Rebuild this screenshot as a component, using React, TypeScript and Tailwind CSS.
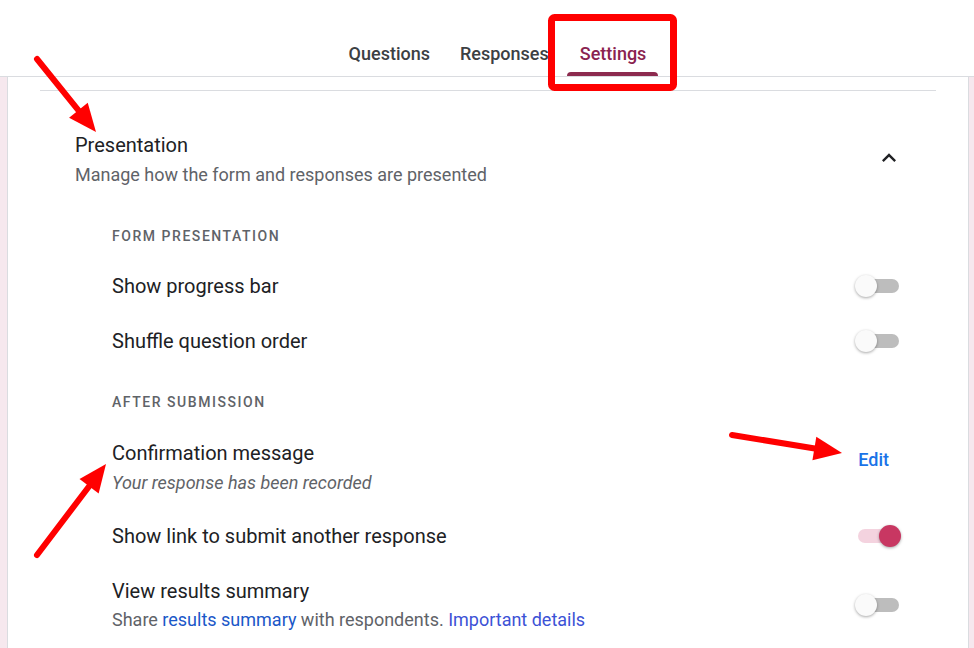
import React from "react";

function Toggle({ on = false }: { on?: boolean }) {
  return (
    <div className="relative w-[46px] h-[24px] shrink-0">
      <div
        className={
          "absolute left-[3px] right-[2px] top-[5px] h-[14px] rounded-full " +
          (on ? "bg-[#f4d3df]" : "bg-[#bdbdbd]")
        }
      />
      <div
        className={
          "absolute top-[1px] w-[22px] h-[22px] rounded-full shadow-[0_1px_3px_rgba(0,0,0,0.35)] " +
          (on ? "right-0 bg-[#c83762]" : "left-0 bg-[#fafafa]")
        }
      />
    </div>
  );
}

function Arrow({ x1, y1, x2, y2 }: { x1: number; y1: number; x2: number; y2: number }) {
  const dx = x2 - x1;
  const dy = y2 - y1;
  const len = Math.sqrt(dx * dx + dy * dy);
  const ux = dx / len;
  const uy = dy / len;
  const hl = 28;
  const hw = 12;
  const bx = x2 - ux * hl;
  const by = y2 - uy * hl;
  const p1 = `${bx - uy * hw},${by + ux * hw}`;
  const p2 = `${bx + uy * hw},${by - ux * hw}`;
  return (
    <g>
      <line x1={x1} y1={y1} x2={bx + ux * 2} y2={by + uy * 2} stroke="#ff0000" strokeWidth={6} strokeLinecap="round" />
      <polygon points={`${x2},${y2} ${p1} ${p2}`} fill="#ff0000" />
    </g>
  );
}

export default function App() {
  return (
    <div
      className="relative w-[974px] h-[648px] overflow-hidden bg-[#f6e8ee]"
      style={{ fontFamily: "Roboto, 'Noto Sans', sans-serif" }}
    >
      {/* Header */}
      <div className="h-[77px] bg-white border-b border-[#dadce0] flex justify-center items-end">
        <div className="flex items-end ml-[24px]">
          <div className="px-[15px] h-[76px] flex items-center pt-[30px] text-[18px] font-medium text-[#3c4043]">Questions</div>
          <div className="px-[15px] h-[76px] flex items-center pt-[30px] text-[18px] font-medium text-[#3c4043]">Responses</div>
          <div className="relative pl-[16px] pr-[18px] h-[76px] flex items-center pt-[30px] text-[18px] font-medium text-[#8a2350]">
            Settings
            <div className="absolute left-[3px] right-[6px] bottom-0 h-[4px] rounded-t-[4px] bg-[#8c2a4e]" />
          </div>
        </div>
      </div>

      {/* Body */}
      <div className="flex h-[571px]">
        <div className="w-[7px] shrink-0" />
        <div className="flex-1 bg-white border-l border-[#dadce0] px-[32px] pt-[13px]">
          <div className="border-t border-[#dadce0]" />
          {/* Section header */}
          <div className="flex items-start justify-between pl-[35px] pr-[33px] mt-[42px]">
            <div className="flex flex-col">
              <div className="h-[24px] leading-[24px] text-[20px] text-[#202124]">Presentation</div>
              <div className="mt-[6px] h-[24px] leading-[24px] text-[18px] text-[#5f6368]">
                Manage how the form and responses are presented
              </div>
            </div>
            <svg className="mt-[11px]" width="28" height="28" viewBox="0 0 24 24">
              <path d="M7.41 15.41 12 10.83l4.59 4.58L18 14l-6-6-6 6z" fill="#202124" />
            </svg>
          </div>

          {/* Items */}
          <div className="pl-[72px] pr-[35px] flex flex-col">
            <div className="mt-[39px] h-[20px] leading-[20px] text-[14px] font-medium tracking-[0.11em] text-[#5f6368]">
              FORM PRESENTATION
            </div>
            <div className="mt-[12px] h-[55px] flex items-center justify-between">
              <span className="text-[20px] text-[#202124]">Show progress bar</span>
              <Toggle />
            </div>
            <div className="h-[55px] flex items-center justify-between">
              <span className="text-[20px] text-[#202124]">Shuffle question order</span>
              <Toggle />
            </div>
            <div className="mt-[24px] h-[20px] leading-[20px] text-[14px] font-medium tracking-[0.11em] text-[#5f6368]">
              AFTER SUBMISSION
            </div>
            <div className="mt-[29px] flex items-start justify-between">
              <div className="flex flex-col">
                <div className="h-[24px] leading-[24px] text-[20px] text-[#202124]">Confirmation message</div>
                <div className="mt-[6px] h-[24px] leading-[24px] text-[18px] italic text-[#5f6368]">
                  Your response has been recorded
                </div>
              </div>
              <div className="mt-[7px] mr-[12px] h-[24px] leading-[24px] text-[18px] font-medium text-[#1a73e8]">Edit</div>
            </div>
            <div className="mt-[29px] h-[24px] flex items-center justify-between">
              <span className="text-[20px] text-[#202124]">Show link to submit another response</span>
              <Toggle on />
            </div>
            <div className="mt-[31px] flex items-center justify-between">
              <div className="flex flex-col">
                <div className="h-[24px] leading-[24px] text-[20px] text-[#202124]">View results summary</div>
                <div className="mt-[7px] h-[20px] leading-[20px] text-[18px] text-[#5f6368]">
                  Share <span className="text-[#1a57c8]">results summary</span> with respondents.{" "}
                  <span className="text-[#3c52d6]">Important details</span>
                </div>
              </div>
              <Toggle />
            </div>
          </div>
        </div>
        <div className="w-[6px] shrink-0 border-l border-[#dadce0]" />
      </div>

      {/* Annotations */}
      <svg className="absolute inset-0 pointer-events-none" width="974" height="648">
        <rect x="551.5" y="17.5" width="122" height="70" rx="3" fill="none" stroke="#ff0000" strokeWidth="7" />
        <Arrow x1={37} y1={59} x2={96} y2={132} />
        <Arrow x1={732} y1={435} x2={842} y2={453} />
        <Arrow x1={37} y1={555} x2={106} y2={464} />
      </svg>
    </div>
  );
}
